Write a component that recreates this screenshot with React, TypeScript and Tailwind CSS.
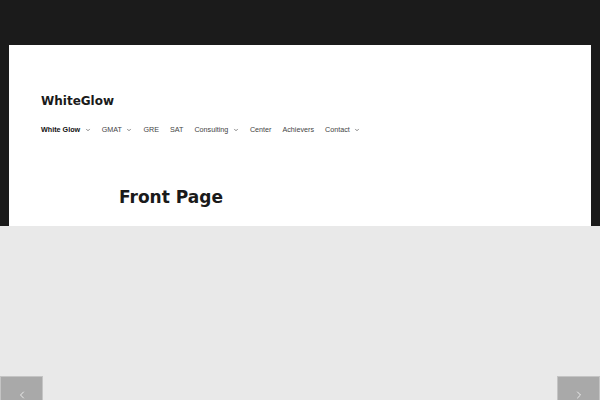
import { ChevronDown, ChevronLeft, ChevronRight } from "lucide-react"

const nav = [
  { label: "White Glow", sub: true, active: true },
  { label: "GMAT", sub: true },
  { label: "GRE" },
  { label: "SAT" },
  { label: "Consulting", sub: true },
  { label: "Center" },
  { label: "Achievers" },
  { label: "Contact", sub: true },
]

export default function App() {
  return (
    <div className="w-[600px] h-[400px] overflow-hidden bg-[#1b1b1b] flex flex-col">
      <div className="px-[9px] pt-[45px]">
        <div className="bg-white h-[181px] px-[32px] pt-[49px]">
          <div className="font-['DejaVu_Sans',sans-serif] font-bold text-[12px] leading-[14px] text-[#1a1a1a]">
            WhiteGlow
          </div>
          <nav className="mt-[17px] flex items-center gap-[11px] font-['Liberation_Sans',Arial,sans-serif] text-[7.2px] leading-[10px] text-[#444]">
            {nav.map((item) => (
              <div key={item.label} className={"flex items-center " + (item.active ? "font-bold text-[#111]" : "")}>
                <span>{item.label}</span>
                {item.sub && <ChevronDown size={6} strokeWidth={2.5} className="ml-[4.5px] text-[#444]" />}
              </div>
            ))}
          </nav>
          <h1 className="mt-[52px] ml-[78px] font-['DejaVu_Sans',sans-serif] font-bold text-[17px] leading-[20px] text-[#1a1a1a]">
            Front Page
          </h1>
        </div>
      </div>
      <div className="relative flex-1 bg-[#e9e9e9]">
        <button className="absolute left-0 top-[150px] w-[43px] h-[30px] bg-[#a9a9a9] border border-[#c4c4c4] flex justify-center pt-[12px] text-white">
          <ChevronLeft size={12} strokeWidth={1.5} />
        </button>
        <button className="absolute right-0 top-[150px] w-[43px] h-[30px] bg-[#a9a9a9] border border-[#c4c4c4] flex justify-center pt-[12px] text-white">
          <ChevronRight size={12} strokeWidth={1.5} />
        </button>
      </div>
    </div>
  )
}
